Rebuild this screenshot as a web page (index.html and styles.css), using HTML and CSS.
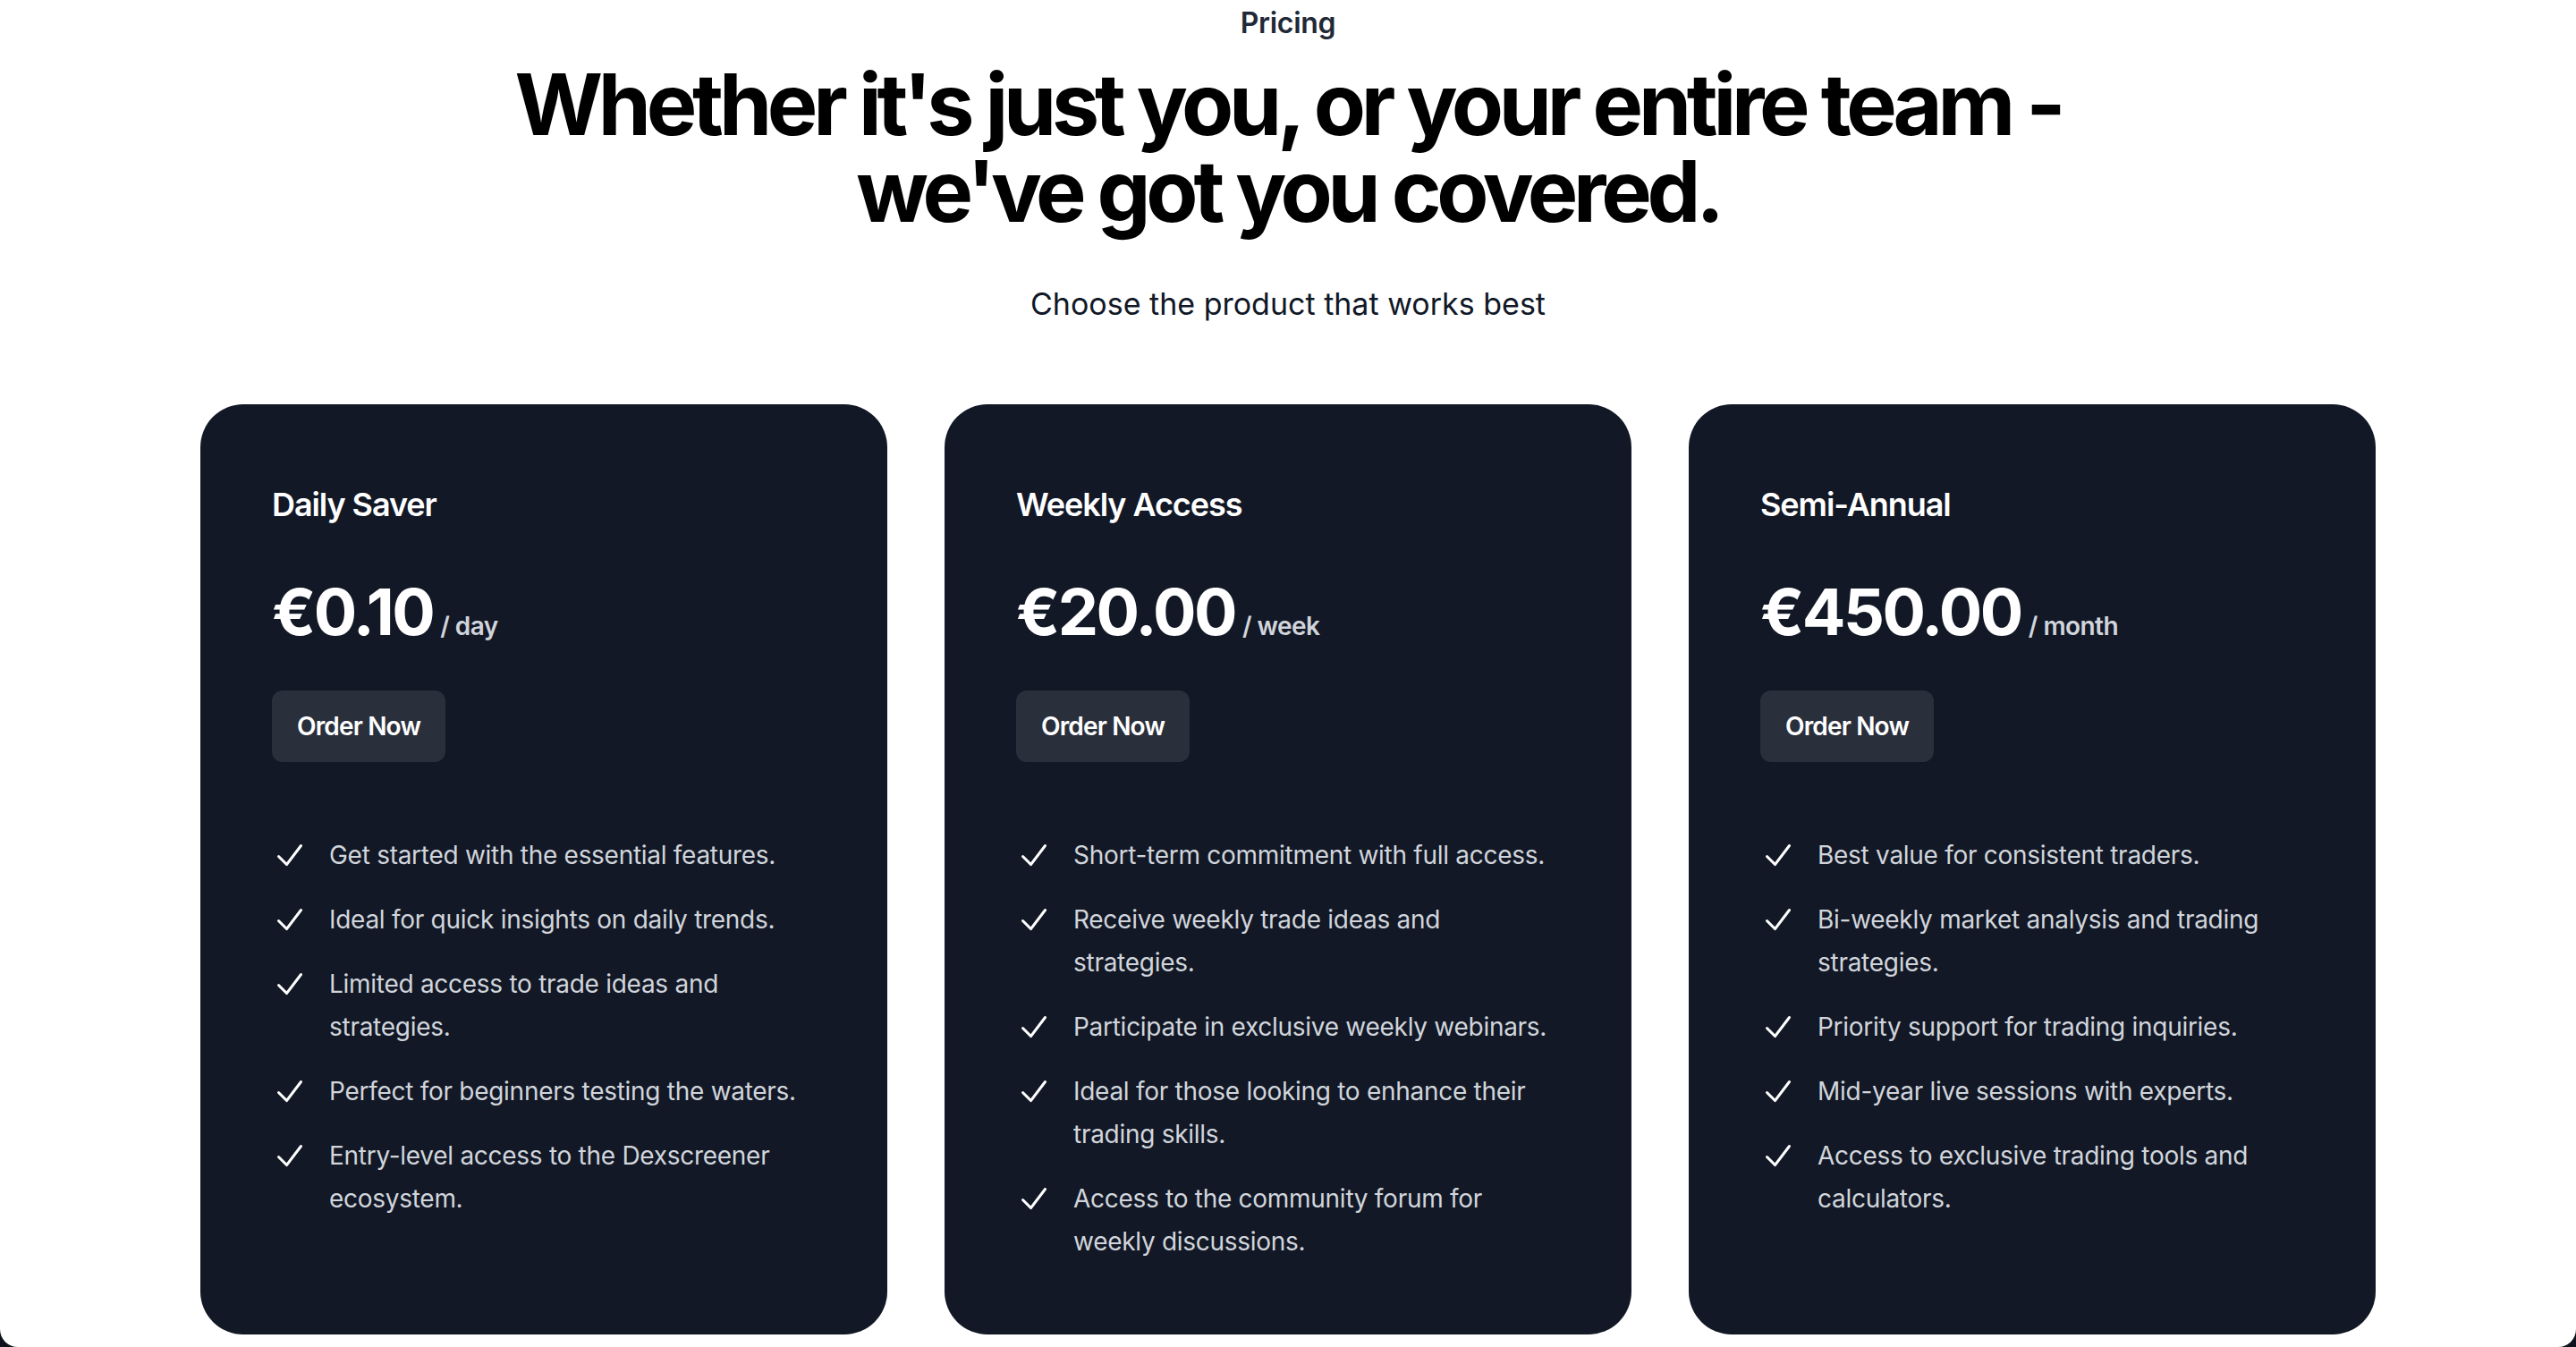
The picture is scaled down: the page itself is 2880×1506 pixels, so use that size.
FILE: index.html
```html
<!DOCTYPE html>
<html lang="en">
<head>
<meta charset="utf-8">
<title>Pricing</title>
<link rel="stylesheet" href="styles.css">
</head>
<body>
<div class="window">
  <section class="pricing">
    <header class="intro">
      <p class="eyebrow">Pricing</p>
      <h2 class="headline">Whether it's just you, or your entire team -<br>we've got you covered.</h2>
      <p class="lead">Choose the product that works best</p>
    </header>

    <div class="tiers">
      <article class="tier">
        <h3 class="tier-name">Daily Saver</h3>
        <p class="tier-price"><span class="amount">€0.10</span><span class="period">/ day</span></p>
        <a class="order" href="#">Order Now</a>
        <ul class="features">
          <li><svg class="check" viewBox="0 0 20 20" aria-hidden="true"><path fill-rule="evenodd" d="M16.704 4.153a.75.75 0 01.143 1.052l-8 10.5a.75.75 0 01-1.127.075l-4.5-4.5a.75.75 0 011.06-1.06l3.894 3.893 7.48-9.817a.75.75 0 011.05-.143z" clip-rule="evenodd"/></svg><span>Get started with the essential features.</span></li>
          <li><svg class="check" viewBox="0 0 20 20" aria-hidden="true"><path fill-rule="evenodd" d="M16.704 4.153a.75.75 0 01.143 1.052l-8 10.5a.75.75 0 01-1.127.075l-4.5-4.5a.75.75 0 011.06-1.06l3.894 3.893 7.48-9.817a.75.75 0 011.05-.143z" clip-rule="evenodd"/></svg><span>Ideal for quick insights on daily trends.</span></li>
          <li><svg class="check" viewBox="0 0 20 20" aria-hidden="true"><path fill-rule="evenodd" d="M16.704 4.153a.75.75 0 01.143 1.052l-8 10.5a.75.75 0 01-1.127.075l-4.5-4.5a.75.75 0 011.06-1.06l3.894 3.893 7.48-9.817a.75.75 0 011.05-.143z" clip-rule="evenodd"/></svg><span>Limited access to trade ideas and strategies.</span></li>
          <li><svg class="check" viewBox="0 0 20 20" aria-hidden="true"><path fill-rule="evenodd" d="M16.704 4.153a.75.75 0 01.143 1.052l-8 10.5a.75.75 0 01-1.127.075l-4.5-4.5a.75.75 0 011.06-1.06l3.894 3.893 7.48-9.817a.75.75 0 011.05-.143z" clip-rule="evenodd"/></svg><span>Perfect for beginners testing the waters.</span></li>
          <li><svg class="check" viewBox="0 0 20 20" aria-hidden="true"><path fill-rule="evenodd" d="M16.704 4.153a.75.75 0 01.143 1.052l-8 10.5a.75.75 0 01-1.127.075l-4.5-4.5a.75.75 0 011.06-1.06l3.894 3.893 7.48-9.817a.75.75 0 011.05-.143z" clip-rule="evenodd"/></svg><span>Entry-level access to the Dexscreener ecosystem.</span></li>
        </ul>
      </article>

      <article class="tier">
        <h3 class="tier-name">Weekly Access</h3>
        <p class="tier-price"><span class="amount">€20.00</span><span class="period">/ week</span></p>
        <a class="order" href="#">Order Now</a>
        <ul class="features">
          <li><svg class="check" viewBox="0 0 20 20" aria-hidden="true"><path fill-rule="evenodd" d="M16.704 4.153a.75.75 0 01.143 1.052l-8 10.5a.75.75 0 01-1.127.075l-4.5-4.5a.75.75 0 011.06-1.06l3.894 3.893 7.48-9.817a.75.75 0 011.05-.143z" clip-rule="evenodd"/></svg><span>Short-term commitment with full access.</span></li>
          <li><svg class="check" viewBox="0 0 20 20" aria-hidden="true"><path fill-rule="evenodd" d="M16.704 4.153a.75.75 0 01.143 1.052l-8 10.5a.75.75 0 01-1.127.075l-4.5-4.5a.75.75 0 011.06-1.06l3.894 3.893 7.48-9.817a.75.75 0 011.05-.143z" clip-rule="evenodd"/></svg><span>Receive weekly trade ideas and strategies.</span></li>
          <li><svg class="check" viewBox="0 0 20 20" aria-hidden="true"><path fill-rule="evenodd" d="M16.704 4.153a.75.75 0 01.143 1.052l-8 10.5a.75.75 0 01-1.127.075l-4.5-4.5a.75.75 0 011.06-1.06l3.894 3.893 7.48-9.817a.75.75 0 011.05-.143z" clip-rule="evenodd"/></svg><span>Participate in exclusive weekly webinars.</span></li>
          <li><svg class="check" viewBox="0 0 20 20" aria-hidden="true"><path fill-rule="evenodd" d="M16.704 4.153a.75.75 0 01.143 1.052l-8 10.5a.75.75 0 01-1.127.075l-4.5-4.5a.75.75 0 011.06-1.06l3.894 3.893 7.48-9.817a.75.75 0 011.05-.143z" clip-rule="evenodd"/></svg><span>Ideal for those looking to enhance their trading skills.</span></li>
          <li><svg class="check" viewBox="0 0 20 20" aria-hidden="true"><path fill-rule="evenodd" d="M16.704 4.153a.75.75 0 01.143 1.052l-8 10.5a.75.75 0 01-1.127.075l-4.5-4.5a.75.75 0 011.06-1.06l3.894 3.893 7.48-9.817a.75.75 0 011.05-.143z" clip-rule="evenodd"/></svg><span>Access to the community forum for weekly discussions.</span></li>
        </ul>
      </article>

      <article class="tier">
        <h3 class="tier-name">Semi-Annual</h3>
        <p class="tier-price"><span class="amount">€450.00</span><span class="period">/ month</span></p>
        <a class="order" href="#">Order Now</a>
        <ul class="features">
          <li><svg class="check" viewBox="0 0 20 20" aria-hidden="true"><path fill-rule="evenodd" d="M16.704 4.153a.75.75 0 01.143 1.052l-8 10.5a.75.75 0 01-1.127.075l-4.5-4.5a.75.75 0 011.06-1.06l3.894 3.893 7.48-9.817a.75.75 0 011.05-.143z" clip-rule="evenodd"/></svg><span>Best value for consistent traders.</span></li>
          <li><svg class="check" viewBox="0 0 20 20" aria-hidden="true"><path fill-rule="evenodd" d="M16.704 4.153a.75.75 0 01.143 1.052l-8 10.5a.75.75 0 01-1.127.075l-4.5-4.5a.75.75 0 011.06-1.06l3.894 3.893 7.48-9.817a.75.75 0 011.05-.143z" clip-rule="evenodd"/></svg><span>Bi-weekly market analysis and trading strategies.</span></li>
          <li><svg class="check" viewBox="0 0 20 20" aria-hidden="true"><path fill-rule="evenodd" d="M16.704 4.153a.75.75 0 01.143 1.052l-8 10.5a.75.75 0 01-1.127.075l-4.5-4.5a.75.75 0 011.06-1.06l3.894 3.893 7.48-9.817a.75.75 0 011.05-.143z" clip-rule="evenodd"/></svg><span>Priority support for trading inquiries.</span></li>
          <li><svg class="check" viewBox="0 0 20 20" aria-hidden="true"><path fill-rule="evenodd" d="M16.704 4.153a.75.75 0 01.143 1.052l-8 10.5a.75.75 0 01-1.127.075l-4.5-4.5a.75.75 0 011.06-1.06l3.894 3.893 7.48-9.817a.75.75 0 011.05-.143z" clip-rule="evenodd"/></svg><span>Mid-year live sessions with experts.</span></li>
          <li><svg class="check" viewBox="0 0 20 20" aria-hidden="true"><path fill-rule="evenodd" d="M16.704 4.153a.75.75 0 01.143 1.052l-8 10.5a.75.75 0 01-1.127.075l-4.5-4.5a.75.75 0 011.06-1.06l3.894 3.893 7.48-9.817a.75.75 0 011.05-.143z" clip-rule="evenodd"/></svg><span>Access to exclusive trading tools and calculators.</span></li>
        </ul>
      </article>
    </div>
  </section>
</div>
</body>
</html>
```

FILE: styles.css
```css
* {
  box-sizing: border-box;
}

html, body {
  margin: 0;
  padding: 0;
}

body {
  background: #0e131b;
  font-family: Inter, "Noto Sans", "Liberation Sans", sans-serif;
  -webkit-font-smoothing: antialiased;
}

.window {
  height: 1506px;
  background: #ffffff;
  border-radius: 0 0 20px 20px;
  overflow: hidden;
}

.pricing {
  padding: 0 224px;
}

.intro {
  text-align: center;
}

.eyebrow {
  margin: 0;
  font-size: 32px;
  line-height: 52px;
  font-weight: 600;
  letter-spacing: -0.01em;
  color: #1f2937;
}

.headline {
  margin: 16px 0 0;
  font-size: 95px;
  line-height: 97px;
  font-weight: 700;
  letter-spacing: -0.055em;
  color: #000000;
}

.lead {
  margin: 46px 0 0;
  font-size: 34px;
  line-height: 64px;
  font-weight: 400;
  color: #111827;
}

.tiers {
  margin-top: 80px;
  display: grid;
  grid-template-columns: repeat(3, 1fr);
  gap: 64px;
}

.tier {
  background: #121826;
  border-radius: 48px;
  padding: 80px;
  display: flex;
  flex-direction: column;
  align-items: flex-start;
}

.tier-name {
  margin: 0;
  font-size: 36px;
  line-height: 64px;
  font-weight: 600;
  letter-spacing: -0.03em;
  color: #ffffff;
}

.tier-price {
  margin: 48px 0 0;
  display: flex;
  align-items: baseline;
  gap: 8px;
}

.amount {
  font-size: 72px;
  line-height: 80px;
  font-weight: 700;
  letter-spacing: -0.035em;
  color: #ffffff;
}

.period {
  font-size: 28px;
  line-height: 48px;
  font-weight: 600;
  letter-spacing: -0.02em;
  color: #d1d5db;
}

.order {
  margin-top: 48px;
  display: inline-block;
  padding: 20px 28px;
  border-radius: 12px;
  background: rgba(255, 255, 255, 0.1);
  color: #ffffff;
  font-size: 28px;
  line-height: 40px;
  font-weight: 600;
  letter-spacing: -0.03em;
  text-decoration: none;
}

.features {
  list-style: none;
  margin: 80px 0 0;
  padding: 0;
  display: flex;
  flex-direction: column;
  gap: 24px;
  font-size: 28px;
  line-height: 48px;
  letter-spacing: -0.01em;
  color: #d1d5db;
}

.features li {
  display: flex;
  gap: 24px;
}

.check {
  flex: none;
  width: 40px;
  height: 48px;
  fill: #ffffff;
}
```
